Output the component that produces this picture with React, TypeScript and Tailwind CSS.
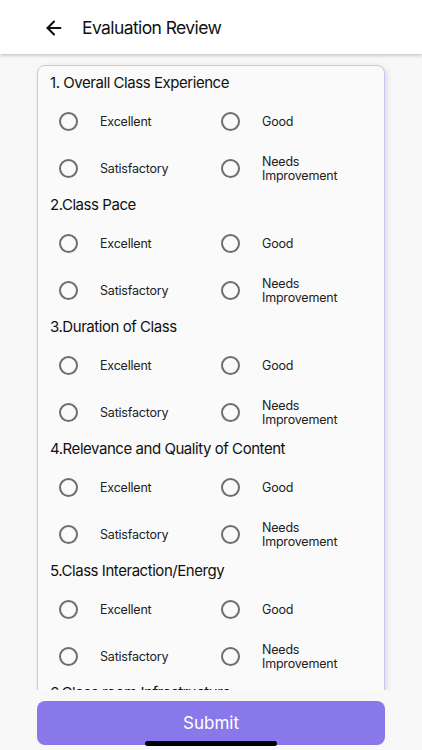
import { ArrowLeft } from "lucide-react";

const questions = [
  "1. Overall Class Experience",
  "2.Class Pace",
  "3.Duration of Class",
  "4.Relevance and Quality of Content",
  "5.Class Interaction/Energy",
  "6.Class room Infrastructure",
];

const options = ["Excellent", "Good", "Satisfactory", "Needs Improvement"];

function Radio({ label }: { label: string }) {
  return (
    <label className="flex items-center h-[47px]">
      <span className="w-[19px] h-[19px] rounded-full border-2 border-[#6e6e6e] shrink-0" />
      <span className="ml-[22px] max-w-[80px] text-[12.5px] leading-[14px] tracking-[-0.2px] text-[#222]">
        {label}
      </span>
    </label>
  );
}

export default function App() {
  return (
    <div
      className="relative h-[750px] w-full flex flex-col bg-[#f8f8f8] overflow-hidden"
      style={{ fontFamily: "Inter, 'Noto Sans', sans-serif" }}
    >
      {/* Header */}
      <div className="h-[54px] shrink-0 bg-white flex items-center pl-[43px] pt-[2px] shadow-[0_2px_3px_rgba(0,0,0,0.18)] z-10">
        <ArrowLeft size={22} strokeWidth={2.3} className="text-[#111]" />
        <span className="ml-[17px] text-[17.5px] tracking-[-0.6px] text-[#111]">Evaluation Review</span>
      </div>

      {/* Questions */}
      <div className="flex-1 overflow-hidden px-[37px] pt-[11px]">
        <div className="bg-[#fafafa] border border-[#c9c4f0] rounded-[8px] shadow-[2px_2px_6px_rgba(0,0,0,0.12)] pl-[12px] pt-[7px] pb-4">
          {questions.map((q) => (
            <div key={q} className="mb-[3px]">
              <div className="text-[15px] leading-[20px] tracking-[-0.45px] text-[#111] mb-[5px]">{q}</div>
              <div className="grid grid-cols-[162px_162px] pl-[9px]">
                {options.map((o) => (
                  <Radio key={o} label={o} />
                ))}
              </div>
            </div>
          ))}
        </div>
      </div>

      {/* Footer */}
      <div className="h-[60px] shrink-0 px-[37px] pt-[11px] bg-[#f8f8f8]">
        <button className="w-full h-[44px] rounded-[8px] bg-[#8878e9] text-white text-[17px] pt-[2px]">
          Submit
        </button>
      </div>

      <div className="absolute bottom-[4px] left-[145px] w-[132px] h-[5px] rounded-full bg-black" />
    </div>
  );
}
